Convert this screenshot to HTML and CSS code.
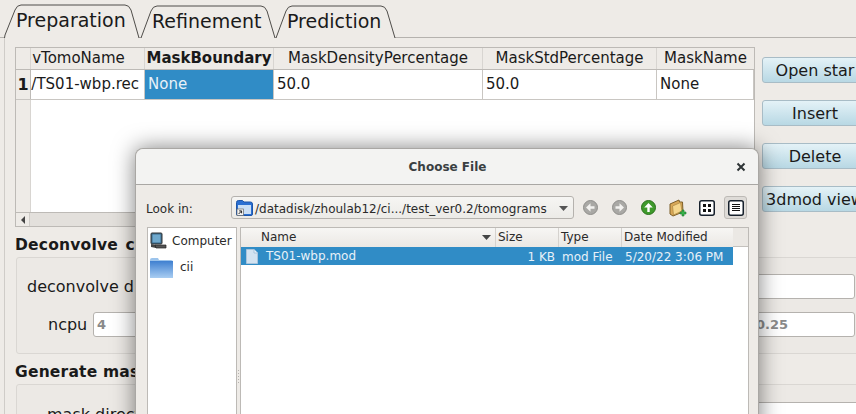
FILE: index.html
```html
<!DOCTYPE html>
<html lang="en">
<head>
<meta charset="utf-8">
<title>Choose File</title>
<link rel="stylesheet" href="styles.css">
</head>
<body>
<div class="app">
  <div class="tabs">
    <div class="tab tab-prep"><svg class="tab-shape" width="136" height="34" viewBox="0 0 136 34"><path d="M0.5 34 L1 31 L11 6 Q13 1 17 1 L121 1 Q125 1 127 6 L135 34" /></svg><span class="tab-label">Preparation</span></div>
    <div class="tab tab-ref"><svg class="tab-shape" width="136" height="33" viewBox="0 0 136 33"><path d="M1 33 L11 6 Q13 1 17 1 L121 1 Q125 1 127 6 L135 33" /></svg><span class="tab-label">Refinement</span></div>
    <div class="tab tab-pred"><svg class="tab-shape" width="121" height="33" viewBox="0 0 121 33"><path d="M1 33 L11 6 Q13 1 17 1 L106 1 Q110 1 112 6 L120 33" /></svg><span class="tab-label">Prediction</span></div>
  </div>
  <div class="pane">
    <div class="top-row">
      <div class="table">
        <div class="thead">
          <div class="corner"></div>
          <div class="th c1 th-first">vTomoName</div>
          <div class="th c2 th-bold">MaskBoundary</div>
          <div class="th c3">MaskDensityPercentage</div>
          <div class="th c4">MaskStdPercentage</div>
          <div class="th c5">MaskName</div>
        </div>
        <div class="tr">
          <div class="row-head">1</div>
          <div class="td c1 clip">/TS01-wbp.rec</div>
          <div class="td c2 selected">None</div>
          <div class="td c3">50.0</div>
          <div class="td c4">50.0</div>
          <div class="td c5">None</div>
        </div>
        <div class="tbody-empty"><div class="row-head-empty"></div></div>
        <div class="hscroll"><div class="scroll-btn"><svg width="6" height="8" viewBox="0 0 6 8"><path d="M5 0 L5 8 L1 4 Z" fill="#444"/></svg></div></div>
      </div>
      <div class="actions">
        <button class="action">Open star</button>
        <button class="action">Insert</button>
        <button class="action">Delete</button>
        <button class="action">3dmod view</button>
      </div>
    </div>
    <h2 class="section-title">Deconvolve ctf</h2>
    <div class="group group-a">
      <div class="field field-one"><span class="field-label label-dec">deconvolve dir</span><span class="text-input input-wide"></span></div>
      <div class="field field-two"><span class="field-label label-ncpu">ncpu</span><span class="text-input hint input-ncpu">4</span><span class="text-input hint input-val">0.25</span></div>
    </div>
    <h2 class="section-title title-mask">Generate mask</h2>
    <div class="group group-b">
      <div class="field field-one"><span class="field-label label-mask">mask directory</span><span class="text-input input-wide"></span></div>
    </div>
  </div>
</div>

<section class="dialog">
  <header class="dialog-title"><span class="dialog-name">Choose File</span>
    <svg class="dialog-close" width="10" height="10" viewBox="0 0 10 10"><path d="M1.5 1.5 L8.5 8.5 M8.5 1.5 L1.5 8.5" stroke="#2e3436" stroke-width="2"/></svg>
  </header>
  <div class="dialog-tools">
    <span class="look-in">Look in:</span>
    <div class="combo">
      <svg width="17" height="16" viewBox="0 0 17 16"><path d="M.5 2.5 Q.5 .5 2.5 .5 L6.5 .5 L8 2 L14.5 2 Q16.5 2 16.5 4 L16.5 14 Q16.5 15.5 15 15.5 L2 15.5 Q.5 15.5 .5 14 Z" fill="#2a6fd2" stroke="#1d55a8"/><rect x="2" y="5" width="13" height="9" fill="#c9def5"/><rect x="1" y="9" width="6.5" height="6.5" fill="#f4f4f4" stroke="#666" stroke-width=".7"/><path d="M2.6 14 L5.4 11.2 M3.2 10.9 L5.6 10.9 L5.6 13.3" stroke="#222" stroke-width="1" fill="none"/></svg>
      <span class="combo-text">/datadisk/zhoulab12/ci.../test_ver0.2/tomograms</span>
      <svg class="combo-arrow" width="9" height="5" viewBox="0 0 9 5"><path d="M0 0 L9 0 L4.5 5 Z" fill="#555"/></svg>
    </div>
    <div class="tool-icons">
      <span class="tool"><svg width="15" height="15" viewBox="0 0 15 15"><circle cx="7.5" cy="7.5" r="7" fill="#a9a8a5" stroke="#8f8e8b"/><path d="M11.5 6.3 L7.5 6.3 L7.5 3.2 L3 7.5 L7.5 11.8 L7.5 8.7 L11.5 8.7 Z" fill="#f2f1ef"/></svg></span>
      <span class="tool"><svg width="15" height="15" viewBox="0 0 15 15"><circle cx="7.5" cy="7.5" r="7" fill="#a9a8a5" stroke="#8f8e8b"/><path d="M3.5 6.3 L7.5 6.3 L7.5 3.2 L12 7.5 L7.5 11.8 L7.5 8.7 L3.5 8.7 Z" fill="#f2f1ef"/></svg></span>
      <span class="tool"><svg width="15" height="15" viewBox="0 0 15 15"><circle cx="7.5" cy="7.5" r="7" fill="#3f9a2c" stroke="#2a701c"/><path d="M6.3 12 L6.3 7.5 L3.2 7.5 L7.5 3 L11.8 7.5 L8.7 7.5 L8.7 12 Z" fill="#fff"/></svg></span>
      <span class="tool"><svg width="18" height="18" viewBox="0 0 18 18"><path d="M1 5 L1 15 L4 17 L14 13 L13.5 3 L10.5 3 L10 1 Z" fill="#d9a858" stroke="#7d5f28"/><path d="M3.5 7 L11.5 3.5 L13 12 L4.5 16 Z" fill="#f5d68c" stroke="#a98540" stroke-width=".7"/><path d="M11 13 L13 13 L13 11 L15 11 L15 13 L17 13 L17 15 L15 15 L15 17 L13 17 L13 15 L11 15 Z" fill="#37b34a" stroke="#1c7a2c" stroke-width=".6"/></svg></span>
      <span class="tool"><svg width="16" height="16" viewBox="0 0 16 16"><rect x=".75" y=".75" width="14.5" height="14.5" rx="2" fill="#fff" stroke="#16202c" stroke-width="1.5"/><rect x="4" y="4" width="3" height="3" fill="#111"/><rect x="9" y="4" width="3" height="3" fill="#111"/><rect x="4" y="9" width="3" height="3" fill="#111"/><rect x="9" y="9" width="3" height="3" fill="#111"/></svg></span>
      <span class="tool tool-on"><svg width="16" height="16" viewBox="0 0 16 16"><rect x=".75" y=".75" width="14.5" height="14.5" rx="2" fill="#fff" stroke="#16202c" stroke-width="1.5"/><path d="M4 4.5 H12 M4 6.5 H12 M4 8.5 H12 M4 10.5 H12" stroke="#111" stroke-width="1"/></svg></span>
    </div>
  </div>
  <div class="dialog-body">
    <aside class="places">
      <div class="place"><svg width="17" height="18" viewBox="0 0 17 18"><rect x="1" y="1" width="11" height="11" rx="1" fill="#3a6a8c" stroke="#333"/><rect x="2.5" y="2.5" width="8" height="8" fill="#6fa8cc"/><path d="M1 12 L1 15 L6 16 L6 13 Z" fill="#444"/><path d="M5 13 L16 13 L16 16 L6 16 Z" fill="#555" stroke="#222" stroke-width=".7"/></svg><span>Computer</span></div>
      <div class="place place-cii"><svg width="23" height="20" viewBox="0 0 23 20"><defs><linearGradient id="fold" x1="0" y1="0" x2="0" y2="1"><stop offset="0" stop-color="#3f80d0"/><stop offset="1" stop-color="#a9cdf2"/></linearGradient></defs><path d="M0 2 Q0 0 2 0 L8 0 L9 2 L21 2 Q23 2 23 4 L23 20 L0 20 Z" fill="#9cc4ec"/><rect x="0" y="3" width="23" height="17" fill="url(#fold)"/></svg><span class="cii">cii</span></div>
    </aside>
    <div class="splitter"><div class="grip"></div></div>
    <div class="files">
      <div class="files-head">
        <div class="fh fh-name">Name<svg class="sort" width="9" height="5" viewBox="0 0 9 5"><path d="M0 0 L9 0 L4.5 5 Z" fill="#444"/></svg></div>
        <div class="fh fh-size">Size</div>
        <div class="fh fh-type">Type</div>
        <div class="fh fh-date">Date Modified</div>
      </div>
      <div class="file-row">
        <div class="fc fc-name"><svg width="12" height="15" viewBox="0 0 12 15"><path d="M.5 .5 L8 .5 L11.5 4 L11.5 14.5 L.5 14.5 Z" fill="#d3e3f1" stroke="#a9c4dc"/><path d="M8 .5 L8 4 L11.5 4" fill="#eef5fb" stroke="#a9c4dc"/></svg><span>TS01-wbp.mod</span></div>
        <div class="fc fc-size">1 KB</div>
        <div class="fc fc-type">mod File</div>
        <div class="fc fc-date">5/20/22 3:06 PM</div>
      </div>
    </div>
  </div>
</section>
</body>
</html>
```

FILE: styles.css
```css
* { box-sizing: border-box; }
html, body { margin: 0; height: 414px; overflow: hidden; }
body { position: relative; width: 856px; background: #eeebe7; font-family: "DejaVu Sans", sans-serif; color: #1a1a1a; }

.app { width: 856px; height: 414px; overflow: hidden; }

.tabs { display: flex; height: 38px; padding: 4px 0 0 4px; border-bottom: 1px solid #b5b2ae; }
.tab { position: relative; height: 33px; font-size: 19px; }
.tab-shape { position: absolute; left: 0; top: 0; overflow: visible; }
.tab-shape path { fill: #eeebe7; stroke: #4f4d4a; stroke-width: 1; }
.tab-label { position: relative; display: block; line-height: 33px; white-space: nowrap; padding-left: 12px; }
.tab-prep { width: 136px; height: 34px; z-index: 1; }
.tab-prep .tab-label { line-height: 32px; }
.tab-ref { width: 135px; margin-top: 1px; height: 32px; }
.tab-pred { width: 121px; margin-top: 1px; height: 32px; }

.pane { margin-left: 4px; padding: 9px 0 0 10px; border-left: 1px solid #cfccc8; height: 376px; width: 860px; }
.top-row { display: flex; gap: 7px; height: 180px; }

.table { width: 740px; height: 180px; border: 1px solid #bdbab6; background: #fff; font-size: 15px; display: flex; flex-direction: column; flex: none; }
.thead { display: flex; height: 22px; background: #eeebe7; border-bottom: 1px solid #bdbab6; flex: none; }
.corner { width: 15px; border-right: 1px solid #d8d5d1; flex: none; }
.th { text-align: center; line-height: 21px; border-right: 1px solid #d8d5d1; white-space: nowrap; overflow: hidden; flex: none; }
.th-first { padding-right: 18px; }
.th-bold { font-weight: 700; }
.c1 { width: 114px; }
.c2 { width: 129px; }
.c3 { width: 209px; }
.c4 { width: 174px; }
.c5 { width: 97px; border-right: 0; }
.tr { display: flex; height: 30px; border-bottom: 1px solid #c9c6c2; flex: none; }
.row-head { width: 15px; flex: none; background: #eeebe7; border-right: 1px solid #bdbab6; font-weight: 700; text-align: center; line-height: 29px; font-size: 16px; }
.td { line-height: 29px; padding-left: 3px; border-right: 1px solid #c9c6c2; white-space: nowrap; overflow: hidden; flex: none; }
.clip { padding-left: 0; padding-right: 5px; text-align: right; }
.selected { background: #308cc6; color: #e8f1f8; }
.tbody-empty { flex: 1; }
.row-head-empty { width: 15px; height: 100%; background: #eeebe7; border-right: 1px solid #d8d5d1; }
.hscroll { height: 14px; background: #e3e0dc; border-top: 1px solid #bdbab6; flex: none; }
.scroll-btn { width: 14px; height: 13px; display: flex; align-items: center; justify-content: center; background: #eeebe7; border-right: 1px solid #cfccc8; }

.actions { display: flex; flex-direction: column; gap: 17px; padding-top: 10px; }
.action { width: 106px; height: 26px; padding: 0; border: 1px solid #a8bcc6; border-radius: 3px; background: linear-gradient(#e4f2f7, #b8d8e4); color: #1a1a1a; font: 16px "DejaVu Sans", sans-serif; white-space: nowrap; }

.section-title { margin: 7px 0 0; height: 23px; font-size: 15.5px; line-height: 22px; font-weight: 700; letter-spacing: .2px; word-spacing: 2px; white-space: nowrap; }
.title-mask { margin-top: 7px; word-spacing: 0; }
.group { margin-left: 1px; border: 1px solid #dad7d3; border-radius: 3px; background: #ece9e5; width: 850px; }
.group-a { height: 97px; }
.group-b { height: 60px; }
.field { display: flex; align-items: center; height: 25px; }
.group-a .field-one { margin-top: 16px; }
.group-a .field-two { margin-top: 13px; }
.group-b .field-one { margin-top: 17px; }
.field-label { font-size: 16px; white-space: nowrap; }
.label-dec { margin-left: 10px; width: 201px; }
.label-ncpu { margin-left: 31px; width: 45px; }
.label-mask { margin-left: 30px; width: 201px; }
.text-input { display: block; height: 25px; background: #fff; border: 1px solid #b5b2ae; border-radius: 3px; flex: none; }
.hint { font-size: 13px; font-weight: 700; color: #8a8a8a; line-height: 23px; padding-left: 3px; }
.input-wide { width: 616px; margin-left: 11px; }
.input-ncpu { width: 300px; }
.input-val { width: 103px; margin-left: 359px; }

.dialog { position: absolute; left: 135px; top: 148px; width: 624px; height: 300px; background: #eeebe7; border: 1px solid #a9a7a4; border-bottom: 0; border-radius: 8px 8px 0 0; box-shadow: 0 0 22px rgba(0,0,0,.5); font-size: 12px; }
.dialog-title { position: relative; height: 36px; display: flex; align-items: center; justify-content: center; background: #f3f3f2; border-bottom: 1px solid #a9a7a4; border-radius: 8px 8px 0 0; }
.dialog-name { font-size: 12px; font-weight: 700; color: #3a3f42; padding-top: 1px; margin-left: 1px; }
.dialog-close { position: absolute; right: 12px; top: 13px; }
.dialog-tools { display: flex; align-items: center; height: 42px; padding: 3px 0 0 10px; }
.look-in { width: 85px; color: #2a2a2a; padding-top: 2px; }
.combo { display: flex; align-items: center; width: 343px; height: 23px; border: 1px solid #b5b2ae; border-radius: 3px; background: linear-gradient(#f6f5f3, #ecebe7); padding-left: 4px; gap: 2px; position: relative; }
.combo-text { white-space: nowrap; color: #2a2a2a; padding-top: 2px; }
.combo-arrow { position: absolute; right: 5px; top: 9px; }
.tool-icons { display: flex; align-items: center; margin-left: 5px; gap: 6px; }
.tool { width: 23px; height: 23px; display: flex; align-items: center; justify-content: center; }
.tool-on { border: 1px solid #bdbab6; border-radius: 3px; background: #dedbd7; }

.dialog-body { display: flex; padding-left: 11px; }
.places { width: 90px; height: 200px; background: #fff; border: 1px solid #bdbab6; padding: 0 0 0 2px; flex: none; }
.place { display: flex; align-items: center; height: 26px; gap: 5px; color: #2a2a2a; white-space: nowrap; }
.place-cii { padding-top: 2px; }
.cii { margin-left: 2px; padding-bottom: 2px; }
.splitter { width: 3px; flex: none; position: relative; }
.grip { position: absolute; left: 1px; top: 143px; width: 1px; height: 15px; background: repeating-linear-gradient(#b5b2ae 0 1px, transparent 1px 3px); }
.files { width: 509px; height: 200px; background: #fff; border: 1px solid #bdbab6; flex: none; }
.files-head { display: flex; height: 19px; background: #ebe8e4; color: #2a2a2a; border-bottom: 1px solid #c4c1bd; }
.fh { height: 19px; line-height: 19px; border-right: 1px solid #d5d2ce; position: relative; background: linear-gradient(#f7f6f4, #ebe8e4); }
.fh-name { width: 255px; padding-left: 20px; }
.fh-size { width: 63px; padding-left: 2px; }
.fh-type { width: 63px; padding-left: 2px; }
.fh-date { width: 111px; padding-left: 2px; border-right: 0; }
.sort { position: absolute; right: 4px; top: 7px; }
.file-row { display: flex; height: 18px; width: 492px; background: #308cc6; color: #e8f1f8; line-height: 20px; }
.fc { white-space: nowrap; height: 18px; }
.fc-name { width: 255px; padding-left: 5px; display: flex; align-items: center; gap: 8px; }
.fc-size { width: 63px; text-align: right; padding-right: 4px; }
.fc-type { width: 63px; padding-left: 3px; }
.fc-date { width: 111px; padding-left: 3px; }
```
